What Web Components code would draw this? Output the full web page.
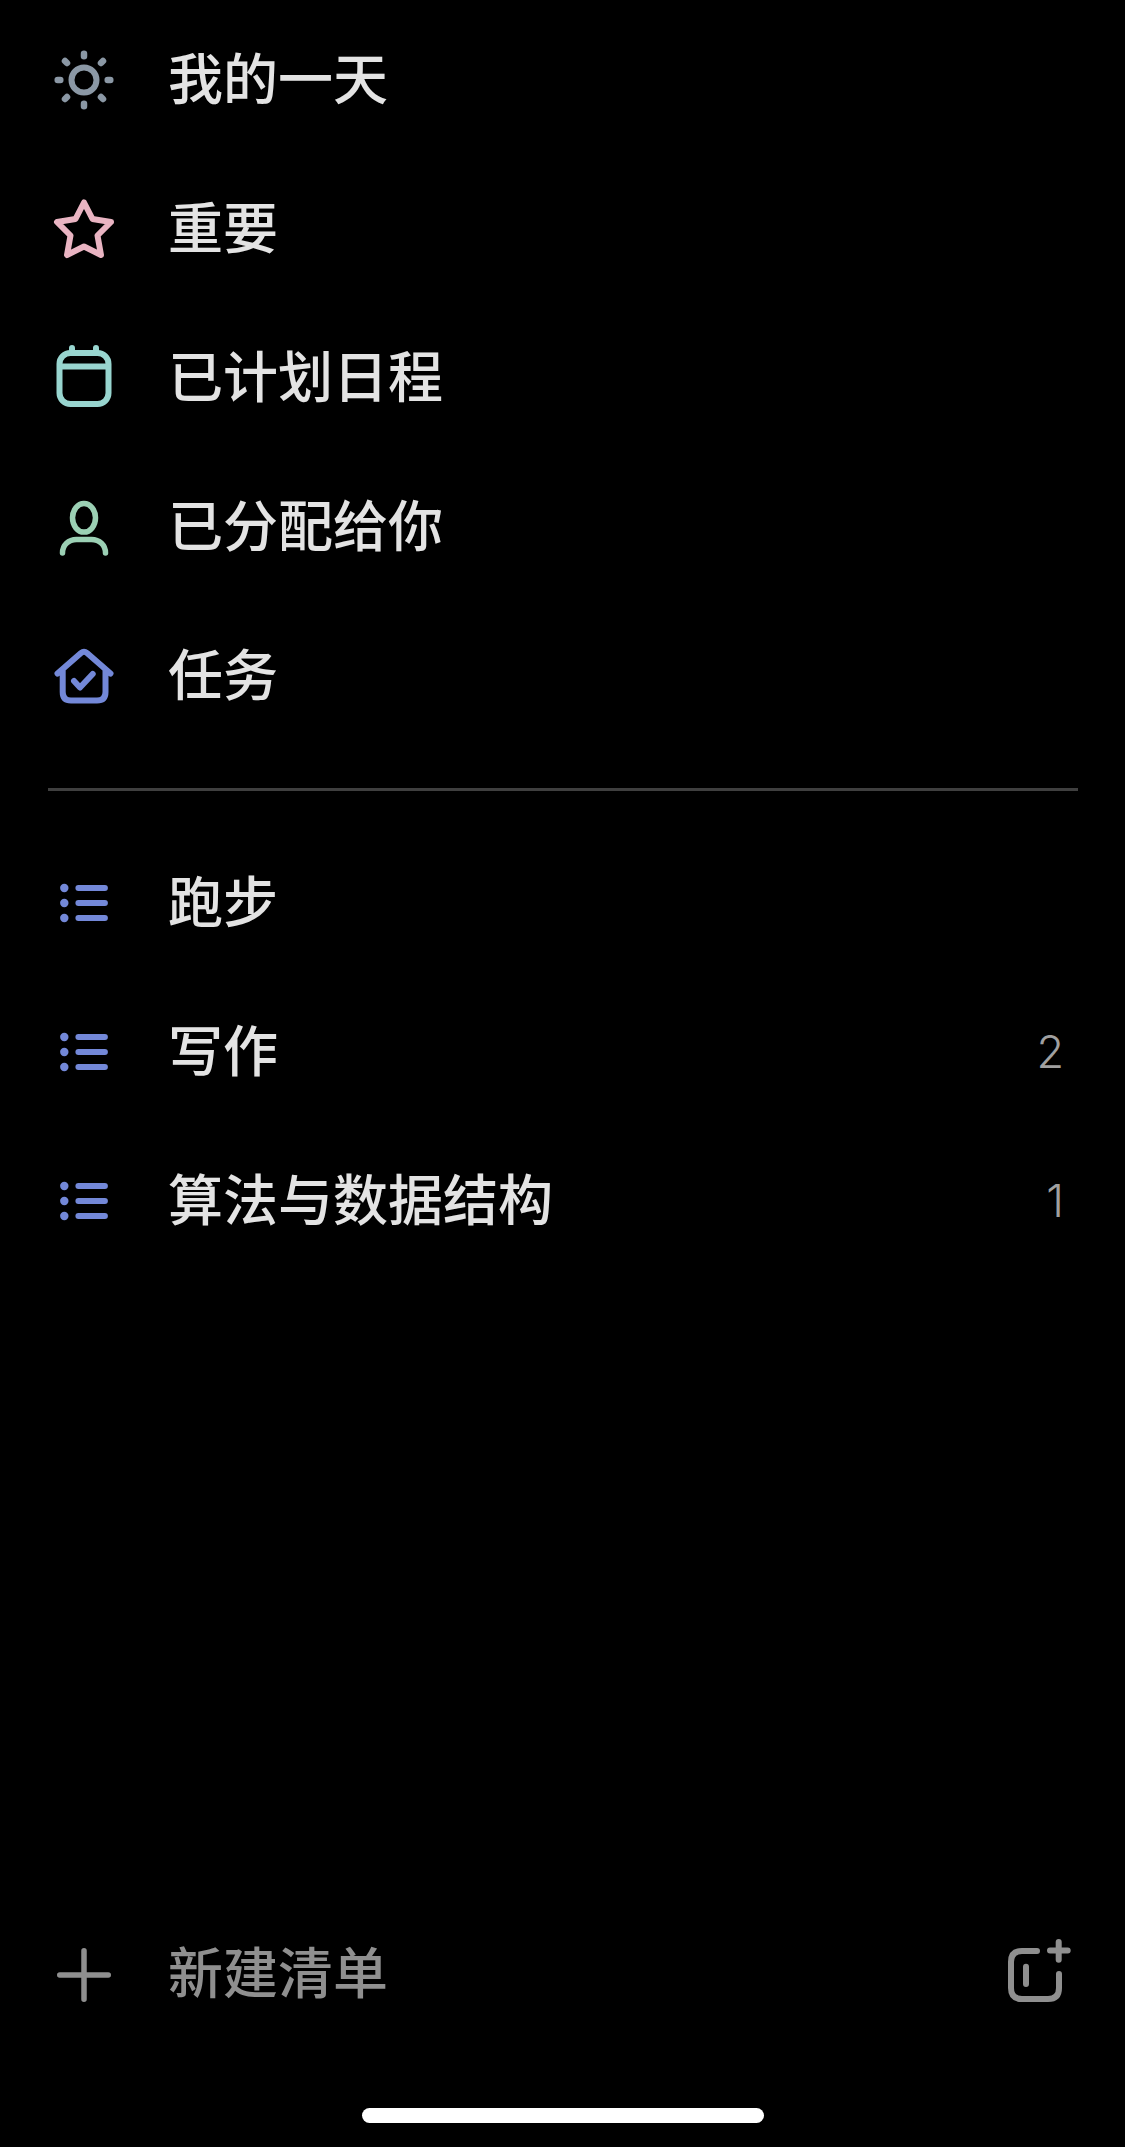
<!DOCTYPE html>
<html lang="zh">
<head>
<meta charset="utf-8">
<style>
  html, body { margin: 0; padding: 0; background: #000; }
  body { width: 1125px; height: 2147px; overflow: hidden; font-family: "Noto Sans CJK SC", "Noto Sans", sans-serif; }
</style>
</head>
<body>
<todo-sidebar>
  <todo-row icon="sun" color="#8b98a5">我的一天</todo-row>
  <todo-row icon="star" color="#e9b4c2">重要</todo-row>
  <todo-row icon="calendar" color="#98d5cf">已计划日程</todo-row>
  <todo-row icon="person" color="#9bd0b4">已分配给你</todo-row>
  <todo-row icon="home" color="#7388d8">任务</todo-row>
  <todo-divider></todo-divider>
  <todo-row icon="list" color="#7388d8">跑步</todo-row>
  <todo-row icon="list" color="#7388d8" count="2">写作</todo-row>
  <todo-row icon="list" color="#7388d8" count="1">算法与数据结构</todo-row>
  <todo-footer slot="footer">新建清单</todo-footer>
</todo-sidebar>

<script>
/* Icons are drawn on a 60x60 box, centred on the row's icon column. */
const ICONS = {
    sun: `<circle cx="30" cy="30" r="12.500" stroke-width="6"/>
        <path stroke-width="6.500" d="M30 3.700v2.600M30 53.700v2.600M3.700 30h2.600M53.700 30h2.600M11 11l2 2M47 47l2 2M11 49l2-2M47 13l2-2"/>`,
    star: `<path stroke-width="6" d="M30 3.500 L38.500 20 L57 23 L43.500 36.500 L47 56 L30 47.500 L13 56 L16.500 36.500 L3 23 L21.500 20 Z"/>`,
    calendar: `<rect x="5.500" y="5" width="49" height="51" rx="11" stroke-width="6"/>
        <path stroke-width="6" d="M6 18.500h48M18 0v5M42 0v5"/>`,
    person: `<ellipse cx="30" cy="20.800" rx="11.500" ry="14.300" stroke-width="5.500"/>
        <path stroke-width="5.500" d="M8.500 56c0-8 6-13.500 14-13.500h15c8 0 14 5.500 14 13.500"/>`,
    home: `<path stroke-width="6" d="M3.500 27.500 L27 7 Q30 4.500 33 7 L56.500 27.500 M8.700 24 V46 Q8.700 54.500 17 54.500 H43 Q51.500 54.500 51.500 46 V24"/>
        <path stroke-width="6" d="M20 35 L26 41.500 L38.700 28"/>`,
    list: `<g fill="currentColor" stroke="none"><circle cx="10.300" cy="15" r="4.200"/><circle cx="10.300" cy="30" r="4.200"/><circle cx="10.300" cy="45" r="4.200"/></g>
        <path stroke-width="6" d="M24.400 15h26.500M24.400 30h26.500M24.400 45h26.500"/>`,
    plus: `<path stroke-width="5.500" d="M30 5.750v48.500M5.750 30h48.500"/>`,
    addList: `<path stroke-width="6" d="M28 6H13Q2 6 2 17V43Q2 54 13 54H39Q50 54 50 43V29M17 21.700V39M49.700 -3V14.700M41 5.500H58.700"/>`
};

const rowTemplate = document.createElement("template");
rowTemplate.innerHTML = `
    <style>
    :host { display: flex; align-items: center; height: 149px; padding: 0 61px 0 54px; }
    svg { width: 60px; height: 60px; flex: none; fill: none; stroke: currentColor; stroke-linecap: round; stroke-linejoin: round; overflow: visible; }
    .label { margin-left: 54px; margin-top: -9px; flex: 1; font-size: 55px; font-weight: 500; line-height: 1; color: #e3e3e3; white-space: nowrap; }
    .count { font-family: "Inter", "Liberation Sans", sans-serif; font-size: 45px; font-weight: 300; line-height: 1; color: #a0a0a0; }
    </style>
    <svg viewBox="0 0 60 60"></svg>
    <span class="label"><slot></slot></span>
    <span class="count"></span>
`;

class TodoRow extends HTMLElement {
    constructor() {
        super();
        this.attachShadow({mode: "open"}).appendChild(rowTemplate.content.cloneNode(true));
    }

    connectedCallback() {
        const svg = this.shadowRoot.querySelector("svg");
        svg.innerHTML = ICONS[this.getAttribute("icon")];
        svg.style.color = this.getAttribute("color");
        this.shadowRoot.querySelector(".count").textContent = this.getAttribute("count") || "";
    }
}
customElements.define("todo-row", TodoRow);

class TodoDivider extends HTMLElement {
    constructor() {
        super();
        this.attachShadow({mode: "open"}).innerHTML = `
            <style>
            :host { display: block; height: 3px; background: #3f3f3f; }
            </style>`;
    }
}
customElements.define("todo-divider", TodoDivider);

class TodoFooter extends HTMLElement {
    constructor() {
        super();
        this.attachShadow({mode: "open"}).innerHTML = `
            <style>
            :host { display: flex; align-items: center; height: 149px; padding: 0 56px 0 54px; color: #8f8f8f; }
            svg { width: 60px; height: 60px; flex: none; fill: none; stroke: currentColor; stroke-linecap: round; stroke-linejoin: round; overflow: visible; }
            .label { margin-left: 54px; margin-top: -11px; flex: 1; font-size: 55px; font-weight: 500; line-height: 1; white-space: nowrap; }
            </style>
            <svg viewBox="0 0 60 60">${ICONS.plus}</svg>
            <span class="label"><slot></slot></span>
            <svg viewBox="0 0 60 60">${ICONS.addList}</svg>`;
    }
}
customElements.define("todo-footer", TodoFooter);

class TodoSidebar extends HTMLElement {
    constructor() {
        super();
        this.attachShadow({mode: "open"}).innerHTML = `
            <style>
            :host { display: flex; flex-direction: column; height: 2147px; box-sizing: border-box; padding-top: 5px; }
            .lists { display: flex; flex-direction: column; flex: 1; }
            ::slotted(todo-divider) { margin: 38px 47px 37px 48px; }
            .foot { display: block; margin-bottom: 59px; }
            .bar { height: 15px; width: 402px; margin: 0 auto; border-radius: 8px; background: #fff; }
            .tail { padding-bottom: 24px; }
            </style>
            <div class="lists"><slot></slot></div>
            <div class="foot"><slot name="footer"></slot></div>
            <div class="tail"><div class="bar"></div></div>`;
    }
}
customElements.define("todo-sidebar", TodoSidebar);
</script>
</body>
</html>
